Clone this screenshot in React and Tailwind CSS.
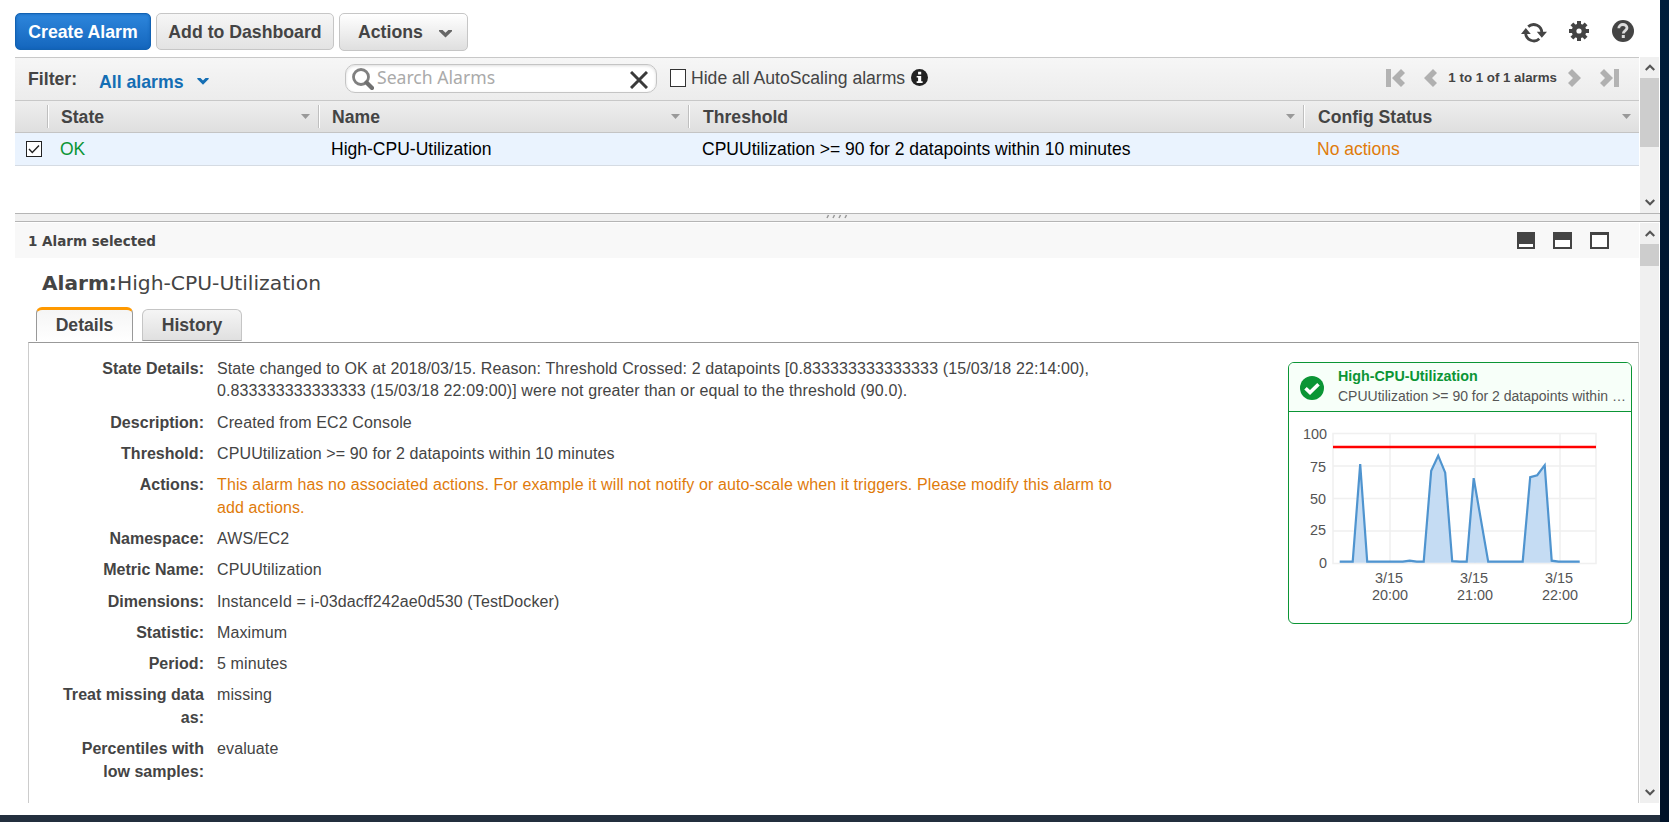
import React from "react";

const rows = [
  ["State Details:", "State changed to OK at 2018/03/15. Reason: Threshold Crossed: 2 datapoints [0.833333333333333 (15/03/18 22:14:00), 0.833333333333333 (15/03/18 22:09:00)] were not greater than or equal to the threshold (90.0)."],
  ["Description:", "Created from EC2 Console"],
  ["Threshold:", "CPUUtilization >= 90 for 2 datapoints within 10 minutes"],
  ["Actions:", "This alarm has no associated actions. For example it will not notify or auto-scale when it triggers. Please modify this alarm to add actions."],
  ["Namespace:", "AWS/EC2"],
  ["Metric Name:", "CPUUtilization"],
  ["Dimensions:", "InstanceId = i-03dacff242ae0d530 (TestDocker)"],
  ["Statistic:", "Maximum"],
  ["Period:", "5 minutes"],
  ["Treat missing data as:", "missing"],
  ["Percentiles with low samples:", "evaluate"],
];

function Chevron({ up = false, className = "" }) {
  return (
    <svg width="10" height="7" viewBox="0 0 10 7" className={className}>
      <path d={up ? "M0.7 6L5 1.7L9.3 6" : "M0.7 1L5 5.3L9.3 1"} fill="none" stroke="currentColor" strokeWidth="2.2" />
    </svg>
  );
}

function FatChevron({ width, height, className = "" }) {
  return (
    <svg width={width} height={height} viewBox="0 0 13 8" className={className}>
      <path d="M0 0H3.6L6.5 2.8L9.4 0H13V1.2L6.5 7.6L0 1.2Z" fill="currentColor" />
    </svg>
  );
}

function HeadCell({ label, className }) {
  return (
    <div className={`flex items-center justify-between ${className}`}>
      <span className="mt-[2px]">{label}</span>
      <svg width="9" height="5" viewBox="0 0 9 5"><path d="M0 0H9L4.5 5Z" fill="#999" /></svg>
    </div>
  );
}

function Divider() {
  return <div className="h-[23px] w-[2px] shrink-0 border-l border-[#bfbfbf] bg-white" />;
}

function Scrollbar({ thumb, className = "" }) {
  return (
    <div className={`flex w-[19px] shrink-0 flex-col items-center bg-[#f0f0f0] text-[#555] ${className}`}>
      <div className="flex h-[21px] shrink-0 items-center"><Chevron up /></div>
      <div className={`w-full bg-[#cdcdcd] ${thumb}`} />
      <div className="mt-auto flex h-[21px] shrink-0 items-center"><Chevron /></div>
    </div>
  );
}

function PageArrow({ next = false, bar = false }) {
  return (
    <svg width={bar ? 19 : 13} height="18" viewBox={bar ? "0 0 19 18" : "0 0 13 18"} className={next ? "-scale-x-100" : ""}>
      {bar && <rect x="0" y="0" width="5" height="18" fill="#b3b3b3" />}
      <path d={bar ? "M15 0L19 4L14 9L19 14L15 18L6 9Z" : "M9 0L13 4L8 9L13 14L9 18L0 9Z"} fill="#b0b0b0" />
    </svg>
  );
}

function Chart() {
  const line = "7,129 20,129 27.5,31.5 34.5,129 70,129 77,128 84,129 91,129 98.5,38 105.5,23 112.5,40 119.5,128.5 127,129 134,129 141,45.5 155.5,129 190,129 197.5,44.5 204.5,42.5 212,32.5 219,128 226,129 247,129";
  return (
    <svg width="342" height="210" viewBox="1289 412 342 210" className="block" fontFamily="'Liberation Sans', Arial, sans-serif" fontSize="14.4" fill="#545454">
      <g stroke="#f0f0f0" strokeWidth="1.6" fill="none">
        <rect x="1333" y="433.5" width="263" height="130" />
        <path d="M1333 466H1596M1333 498.5H1596M1333 531H1596M1390 433V563M1475 433V563M1560 433V563" />
      </g>
      <g transform="translate(1332.7 432.7)">
        <polygon points={`${line} 247,130 7,130`} fill="#c5dcf3" />
        <polyline points={line} fill="none" stroke="#4f94cf" strokeWidth="2.2" />
      </g>
      <path d="M1333 447H1596" stroke="#f00" strokeWidth="2.6" />
      <g textAnchor="end">
        <text x="1327" y="439">100</text>
        <text x="1326" y="472">75</text>
        <text x="1326" y="504">50</text>
        <text x="1326" y="535">25</text>
        <text x="1327" y="568">0</text>
      </g>
      <g textAnchor="middle">
        <text x="1389" y="583">3/15</text><text x="1390" y="600">20:00</text>
        <text x="1474" y="583">3/15</text><text x="1475" y="600">21:00</text>
        <text x="1559" y="583">3/15</text><text x="1560" y="600">22:00</text>
      </g>
    </svg>
  );
}

function AlarmCard() {
  return (
    <div className="h-[262px] w-[344px] overflow-hidden rounded-md border border-[#0b9535] bg-white">
      <div className="flex h-[49px] items-center border-b border-[#0b9535] bg-[#f7fff9] pl-[11px]">
        <svg width="24" height="24" viewBox="0 0 24 24" className="mt-px shrink-0">
          <circle cx="12" cy="12" r="12" fill="#0b9535" />
          <path d="M5.5 12.3L10 16.6L18.5 8.3" fill="none" stroke="#fff" strokeWidth="3.6" />
        </svg>
        <div className="mb-[2px] ml-[14px] leading-[20px] whitespace-nowrap">
          <div className="text-[14.3px] font-bold text-[#0b9535]">High-CPU-Utilization</div>
          <div className="text-[14px] text-[#555]">CPUUtilization &gt;= 90 for 2 datapoints within …</div>
        </div>
      </div>
      <Chart />
    </div>
  );
}

export default function App() {
  return (
    <div className="flex h-[822px] w-[1669px] overflow-hidden bg-white font-['Liberation_Sans',Arial,sans-serif] text-[#444]">
      <div className="flex w-[1660px] shrink-0 flex-col">
        <div className="flex h-[57px] shrink-0 items-start pt-[13px] pl-[15px] text-[17.7px] font-bold">
          <button className="h-[37px] w-[136px] rounded-[5px] border border-[#1262b3] bg-linear-to-b from-[#2d86dc] to-[#1466bd] pt-[2px] text-white shadow-[inset_0_0_3px_#1262b3]">Create Alarm</button>
          <button className="ml-[5px] h-[37px] w-[178px] rounded-[5px] border border-[#c6c6c6] bg-linear-to-b from-[#f6f6f6] to-[#e3e3e3] pt-[2px]">Add to Dashboard</button>
          <button className="ml-[5px] flex h-[38px] w-[129px] items-center rounded-[5px] border border-[#c6c6c6] bg-linear-to-b from-white to-[#dfdfdf] pl-[18px]">
            Actions
            <FatChevron width={13} height={8} className="mt-[3px] ml-[16px] text-[#666]" />
          </button>
          <div className="mt-[6px] ml-auto flex items-start pr-[26px] text-[#444]">
            <svg width="26" height="20" viewBox="0 0 26 20" className="mt-[4px]">
              <path d="M7.2 3.6A8.2 8.2 0 0 1 20.8 9.8M4.6 10.2A8.2 8.2 0 0 0 18.3 15.8" fill="none" stroke="currentColor" strokeWidth="2.8" />
              <path d="M0 11L4.8 5L9.8 11ZM15.8 8.8L20.8 14.8L26 8.8Z" fill="currentColor" />
            </svg>
            <svg width="20" height="20" viewBox="0 0 20 20" className="mt-[1.5px] ml-[22px]">
              <g fill="currentColor">
                <circle cx="10" cy="10" r="7.3" />
                <path d="M8 0H12V20H8Z" /><path d="M8 0H12V20H8Z" transform="rotate(45 10 10)" />
                <path d="M8 0H12V20H8Z" transform="rotate(90 10 10)" /><path d="M8 0H12V20H8Z" transform="rotate(135 10 10)" />
              </g>
              <circle cx="10" cy="10" r="2.6" fill="#fff" />
            </svg>
            <svg width="22" height="22" viewBox="0 0 22 22" className="mt-px ml-[23px]">
              <circle cx="11" cy="11" r="11" fill="currentColor" />
              <path d="M6.8 8.3C6.8 3.3 15 3.3 15 8C15 10.5 11.3 10.6 11.3 13.5" fill="none" stroke="#ddd" strokeWidth="2.8" />
              <rect x="9.8" y="15" width="3" height="3" fill="#ddd" />
            </svg>
          </div>
        </div>

        <div className="flex h-[156px] shrink-0 pl-[15px]">
          <div className="flex w-[1624px] flex-col">
            <div className="flex h-[44px] shrink-0 items-center border-y border-[#c8c8c8] bg-linear-to-b from-[#f6f6f6] to-[#ececec] pl-[13px] text-[17.7px]">
              <span className="w-[71px] font-bold">Filter:</span>
              <span className="mt-[6px] w-[84px] font-bold whitespace-nowrap text-[#146eb4]">All alarms</span>
              <FatChevron width={12} height={7} className="mt-[4px] ml-[14px] text-[#146eb4]" />
              <div className="mb-px ml-[136px] flex h-[29px] w-[312px] items-center rounded-[10px] border border-[#c4c4c4] bg-white pl-[6px] shadow-[inset_0_1px_3px_#ddd]">
                <svg width="22" height="22" viewBox="0 0 22 22">
                  <circle cx="9" cy="9" r="7.5" fill="none" stroke="#808080" strokeWidth="2.8" />
                  <path d="M14.5 14.5L20 20" stroke="#707070" strokeWidth="4.2" strokeLinecap="round" />
                </svg>
                <span className="mb-[3px] ml-[3px] font-['Noto_Sans',sans-serif] text-[17.6px] text-[#aaa]">Search Alarms</span>
                <svg width="18" height="18" viewBox="0 0 18 18" className="mt-[2px] mr-[8px] ml-auto">
                  <path d="M1 1L17 17M17 1L1 17" stroke="#3a3a3a" strokeWidth="3" />
                </svg>
              </div>
              <div className="mb-[2px] ml-[13px] h-[18px] w-[16px] border border-[#333] bg-white" />
              <span className="mb-[2px] ml-[5px] text-[17.6px] whitespace-nowrap">Hide all AutoScaling alarms</span>
              <svg width="17" height="17" viewBox="0 0 18 18" className="mb-[4px] ml-[6px]">
                <circle cx="9" cy="9" r="9" fill="#222" />
                <path d="M7.5 3H10.8V5.7H7.5ZM6 7.3H10.8V13H12.3V14.7H6V13H7.5V9H6Z" fill="#fff" />
              </svg>
              <div className="mb-[3px] ml-auto flex items-center pr-[20px]">
                <PageArrow bar />
                <div className="ml-[19.5px]"><PageArrow /></div>
                <span className="mr-[10.5px] ml-[11px] text-[13.3px] font-bold whitespace-nowrap">1 to 1 of 1 alarms</span>
                <PageArrow next />
                <div className="ml-[19.5px]"><PageArrow next bar /></div>
              </div>
            </div>
            <div className="flex h-[32px] shrink-0 items-center border-b border-[#c4c4c4] bg-linear-to-b from-[#eee] to-[#dfdfdf] text-[17.6px] font-bold">
              <div className="w-[32px] shrink-0" />
              <Divider /><HeadCell label="State" className="w-[269px] pr-[8px] pl-[12px]" />
              <Divider /><HeadCell label="Name" className="w-[368px] pr-[8px] pl-[12px]" />
              <Divider /><HeadCell label="Threshold" className="w-[613px] pr-[8px] pl-[13px]" />
              <Divider /><HeadCell label="Config Status" className="w-[334px] pr-[8px] pl-[13px]" />
            </div>
            <div className="flex h-[33px] shrink-0 items-center border-b border-[#d5dbe3] bg-[#eaf3fe] text-[17.52px]">
              <div className="w-[45px] pl-[11px]">
                <svg width="16" height="16" viewBox="0 0 16 16">
                  <rect x=".5" y=".5" width="15" height="15" fill="#fff" stroke="#222" />
                  <path d="M3 8L6.3 11.5L13 4.5" fill="none" stroke="#222" strokeWidth="1.4" />
                </svg>
              </div>
              <span className="w-[271px] text-[#0b9535]">OK</span>
              <span className="w-[371px] text-black">High-CPU-Utilization</span>
              <span className="w-[615px] text-black">CPUUtilization &gt;= 90 for 2 datapoints within 10 minutes</span>
              <span className="text-[#e07b0b]">No actions</span>
            </div>
          </div>
          <Scrollbar thumb="h-[69px]" className="ml-px" />
        </div>

        <div className="ml-[15px] flex h-[9px] shrink-0 justify-center border-y border-[#b5b5b5] bg-[#f0f0f0] pr-[2px]">
          <svg width="22" height="5" viewBox="0 0 22 5"><path d="M1 4L2.5 1M7 4L8.5 1M13 4L14.5 1M19 4L20.5 1" stroke="#999" strokeWidth="1.5" /></svg>
        </div>

        <div className="mt-px flex h-[580px] shrink-0 pl-[15px]">
          <div className="flex w-[1624px] flex-col">
            <div className="flex h-[35px] shrink-0 items-center bg-[#f8f8f8] pl-[13px] font-['DejaVu_Sans',sans-serif] text-[13.5px] font-bold">
              <span className="mt-[2px]">1 Alarm selected</span>
              <div className="ml-auto flex gap-[18px] pr-[30px]">
                <div className="flex h-[17px] w-[18px] items-end bg-[#444] p-[2px]"><div className="h-[3px] w-full bg-white" /></div>
                <div className="flex h-[17px] w-[19px] items-end bg-[#444] p-[2px]"><div className="h-[7px] w-full bg-white" /></div>
                <div className="h-[17px] w-[19px] border-2 border-t-[3px] border-[#444] bg-white" />
              </div>
            </div>
            <div className="flex h-[49px] shrink-0 items-baseline pt-[13px] pl-[27px] font-['DejaVu_Sans',sans-serif] text-[20.3px] leading-[24px]">
              <b className="text-[20.1px]">Alarm:</b>High-CPU-Utilization
            </div>
            <div className="flex h-[34px] shrink-0 items-start pl-[21px] text-[17.6px] font-bold">
              <div className="flex h-[34px] w-[97px] items-center justify-center rounded-t-md border-x border-t-[3px] border-x-[#999] border-t-[#f90] bg-linear-to-b from-[#f5f5f5] to-white">Details</div>
              <div className="mt-[2px] ml-[9px] flex h-[32px] w-[100px] items-center justify-center rounded-t-md border border-[#c5c5c5] border-b-[#999] bg-linear-to-b from-[#f5f5f5] to-[#e0e0e0]">History</div>
            </div>
            <div className="mt-px ml-[13px] flex min-h-0 flex-1 justify-between border border-b-0 border-[#ccc] border-t-[#999] pt-[15px] pr-[6px]">
              <div className="flex flex-col gap-[8.9px] text-[16px] leading-[22.4px]">
                {rows.map(([label, value]) => (
                  <div key={label} className="flex">
                    <div className="ml-[24px] w-[151px] text-right font-bold tracking-[0.03px]">{label}</div>
                    <div className={`ml-[13px] w-[910px] tracking-[0.115px] ${label === "Actions:" ? "text-[#e07b0b]" : ""}`}>{value}</div>
                  </div>
                ))}
              </div>
              <div className="mt-[4px]"><AlarmCard /></div>
            </div>
          </div>
          <Scrollbar thumb="h-[22px]" className="ml-px" />
        </div>
        <div className="mt-auto h-[7px] bg-[#232f3e]" />
      </div>
      <div className="flex-1 bg-linear-to-b from-[#001e3c] via-[#00132b] to-[#001228]" />
    </div>
  );
}
